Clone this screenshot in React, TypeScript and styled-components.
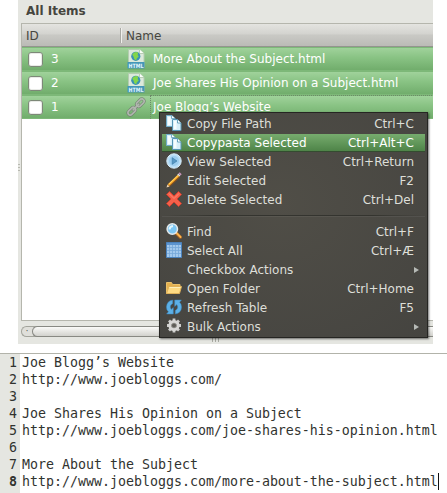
import React from "react";
import styled, { createGlobalStyle, css } from "styled-components";

const GlobalStyle = createGlobalStyle`
  * { box-sizing: border-box; }
  body { margin: 0; background: #fff; overflow: hidden; }
`;

const Screen = styled.div`
  position: relative;
  display: flex;
  flex-direction: column;
  width: 447px;
  height: 493px;
  background: #fff;
  font: 12px "DejaVu Sans", sans-serif;
  color: #46463f;
`;

const Panel = styled.section`
  display: flex;
  flex-direction: column;
  width: 415px;
  height: 344px;
  margin-left: 18px;
  padding-left: 3px;
  background: #e5e6e1;
`;

const PanelTitle = styled.h2`
  height: 23px;
  margin: 0;
  padding-left: 5px;
  font-size: 12px;
  line-height: 22px;
  font-weight: bold;
`;

const Table = styled.div`
  height: 298px;
  border: 1px solid #b5b6ad;
  border-right: 0;
  background: #fff;
`;

const HeaderRow = styled.div`
  display: flex;
  align-items: center;
  height: 23px;
  border-bottom: 1px solid #94948f;
  background: linear-gradient(#e4e4e0, #d3d3cf 45%, #c9c9c5 50%, #bbbbb6);
`;

const HeaderCell = styled.div<{ $width?: number }>`
  width: ${(p) => (p.$width ? `${p.$width}px` : "auto")};
  height: 15px;
  padding-left: 4px;
  line-height: 17px;
  ${(p) =>
    p.$width &&
    css`
      border-right: 1px solid #f0f0ed;
      box-shadow: inset -1px 0 #aaaaa5;
    `}
`;

const Row = styled.div`
  display: flex;
  align-items: center;
  height: 24px;
  color: #fff;
  background: linear-gradient(#7db878 0 1px, #a0d29b 1px, #8ac485 10px, #71ad6c 23px, #7db878 23px);
`;

const CheckBox = styled.span`
  width: 15px;
  height: 15px;
  margin-left: 6px;
  border: 1px solid #7d8878;
  border-radius: 3px;
  background: #fff;
  box-shadow: inset 0 0 0 1px #e9ebe7;
`;

const IdText = styled.span`
  width: 83px;
  padding-left: 8px;
`;

const FileIcon = styled.span`
  display: flex;
  width: 20px;
  height: 22px;
`;

const NameText = styled.span<{ $focus?: boolean }>`
  flex: 1;
  height: 24px;
  margin-left: 4px;
  padding-left: 2px;
  line-height: 24px;
  border-left: 1px dotted ${(p) => (p.$focus ? "#6d8a68" : "transparent")};
  ${(p) => p.$focus && css`background: linear-gradient(90deg, #6d8a68 50%, transparent 50%) 0 0 / 2px 1px repeat-x;`}
`;

const ScrollTrack = styled.div`
  display: flex;
  align-items: center;
  height: 11px;
  margin-top: 5px;
  border: 1px solid #a3a49c;
  border-right: 0;
  border-radius: 6px 0 0 6px;
  background: #dfdfda;
`;

const ScrollDot = styled.span`
  width: 10px;
  text-align: center;
  font-size: 8px;
  line-height: 8px;
`;

const ScrollThumb = styled.div`
  flex: 1;
  height: 11px;
  border: 1px solid #888983;
  border-right: 0;
  border-radius: 6px 0 0 6px;
  background: linear-gradient(#fafaf8, #d2d2cd);
`;

const Grip = styled.div<{ $vertical?: boolean }>`
  position: absolute;
  ${(p) =>
    p.$vertical
      ? css`
          left: 18px; top: 164px; width: 2px; height: 7px;
          background: repeating-linear-gradient(#b8b9b1 0 1px, transparent 1px 3px);
        `
      : css`
          left: 212px; top: 338px; width: 7px; height: 4px;
          background: repeating-linear-gradient(90deg, #a9aaa2 0 1px, transparent 1px 3px);
        `}
`;

const Menu = styled.div`
  position: absolute;
  left: 159px;
  top: 112px;
  width: 269px;
  height: 226px;
  padding: 1px 2px;
  border: 1px solid #252522;
  background: radial-gradient(ellipse at 45% 40%, #504e47, #454440);
  box-shadow: 1px 1px 2px rgba(0, 0, 0, 0.55);
  color: #dedfd9;
`;

const MenuItem = styled.div<{ $active?: boolean }>`
  display: flex;
  align-items: center;
  height: 19px;
  padding: 0 11px 0 4px;
  ${(p) =>
    p.$active &&
    css`
      color: #fff;
      background: linear-gradient(transparent 1px, #77ac6e 1px, #4e8448 18px, #344c30 18px);
    `}
`;

const MenuIcon = styled.span`
  display: flex;
  width: 21px;
  height: 16px;
  margin-bottom: 1px;
`;

const MenuLabel = styled.span`
  flex: 1;
`;

const SubArrow = styled.span`
  width: 0;
  height: 0;
  margin-right: -5px;
  border-left: 5px solid #b6bab6;
  border-top: 3px solid transparent;
  border-bottom: 3px solid transparent;
`;

const Separator = styled.div`
  height: 1px;
  margin: 6px 0;
  background: linear-gradient(90deg, transparent, #34342f 20%, #34342f 80%, transparent);
  box-shadow: 0 1px rgba(255, 255, 255, 0.06);
`;

const Editor = styled.section`
  display: flex;
  height: 140px;
  margin-top: 9px;
  border-top: 1px solid #b2b3aa;
  font: 13.29px/17px "DejaVu Sans Mono", monospace;
  color: #31332f;
`;

const Gutter = styled.div`
  width: 20px;
  padding-right: 3px;
  background: #e5e6e1;
  text-align: right;
`;

const LineNumber = styled.div<{ $current?: boolean }>`
  height: 17px;
  font-weight: ${(p) => (p.$current ? "bold" : "normal")};
`;

const Code = styled.div`
  padding-left: 2px;
`;

const CodeLine = styled.div<{ $caret?: boolean }>`
  width: max-content;
  height: 17px;
  white-space: pre;
  ${(p) => p.$caret && css`box-shadow: 1px 0 #111;`}
`;

const Svg = ({ children }: { children: React.ReactNode }) => (
  <svg width="16" height="16" viewBox="0 0 16 16">{children}</svg>
);

const HtmlIcon = () => (
  <svg width="20" height="22" viewBox="0 0 20 22">
    <path d="M2.500 1.500h11.500l4 4v14H2.500z" fill="#dce9db" stroke="#b4ccb1" />
    <path d="M13.500 1.500v4h4.500" fill="#fafffa" stroke="#b9ceb6" />
    <circle cx="9.800" cy="8.300" r="4.600" fill="#3a93b4" />
    <path d="M6.200 6.500q2.500-3.500 6-2l-.5 2.500 1 1.500-2 2-.5 2-2-1.500-.5-2z" fill="#83d64a" />
    <path d="M1.500 14h17v6.500h-17z" fill="#4497b8" />
    <text x="10" y="19.500" textAnchor="middle" fontFamily="DejaVu Sans" fontWeight="bold" fontSize="6" textLength="15" lengthAdjust="spacingAndGlyphs" fill="#e4f6fc">HTML</text>
  </svg>
);

const LinkIcon = () => (
  <svg width="20" height="22" viewBox="0 0 20 22">
    <g transform="rotate(-45 10 11)" fill="none">
      <g stroke="#71816f" strokeWidth="2.800">
        <rect x="-.5" y="8.700" width="9" height="4.600" rx="2.300" />
        <rect x="11.500" y="8.700" width="9" height="4.600" rx="2.300" />
        <path d="M6 11h8" strokeLinecap="round" />
      </g>
      <g stroke="#b0b6ae" strokeWidth="1.700">
        <rect x="-.5" y="8.700" width="9" height="4.600" rx="2.300" />
        <rect x="11.500" y="8.700" width="9" height="4.600" rx="2.300" />
        <path d="M6 11h8" strokeLinecap="round" />
      </g>
    </g>
  </svg>
);

const CopyIcon = () => (
  <Svg>
    <path d="M.5.500h5.500l3 3v8H.5z" fill="#d9eff9" stroke="#71acc9" />
    <path d="M5.500.500v3h3.500" fill="#fff" stroke="#5c9ab9" strokeWidth=".8" />
    <path d="M6.500 4.500h5l3.500 3.500v7.500H6.500z" fill="#d9eff9" stroke="#5796b5" />
    <path d="M2 2h2.500v8H2zM8 6h2.500v8H8z" fill="#f7fdff" />
    <path d="M11.500 4.500v3.500h3.500" fill="#fff" stroke="#4e8fae" strokeWidth=".8" />
  </Svg>
);

const PlayIcon = () => (
  <Svg>
    <circle cx="8" cy="8" r="7.200" fill="#b9def6" stroke="#d9edf9" />
    <circle cx="8" cy="8" r="5" fill="#9dceef" />
    <path d="M6.200 4.700 11 8l-4.800 3.300z" fill="#5798c4" stroke="#3977a3" strokeWidth=".6" />
  </Svg>
);

const PencilIcon = () => (
  <Svg>
    <path d="m2 14 2-1L13 4.500" stroke="#825022" strokeWidth="2.600" fill="none" />
    <path d="m2.500 13 10-9.500" stroke="#ffab25" strokeWidth="2.300" />
    <path d="m3 12 9-8.500" stroke="#ffe07a" strokeWidth=".8" />
    <path d="m12.300 3.600 1-1" stroke="#dedee0" strokeWidth="2.800" />
    <path d="m13.500 2.500 1.200-1.200" stroke="#c693b9" strokeWidth="2.800" />
    <path d="M.5 15.500 1.500 12.500l2 2z" fill="#f4d9b3" />
  </Svg>
);

const DeleteIcon = () => (
  <Svg>
    <path d="M3.500.500 8 5l4.500-4.500 3 3L11 8l4.500 4.500-3 3L8 11l-4.500 4.500-3-3L5 8 .5 3.500z" fill="#f4604a" stroke="#d0402f" strokeLinejoin="round" />
    <path d="m3 2.500 5 5 5-5" fill="none" stroke="#ff8a74" />
  </Svg>
);

const FindIcon = () => (
  <Svg>
    <path d="m10 10 4.300 4.300" stroke="#925b27" strokeWidth="3.500" strokeLinecap="round" />
    <path d="m10.500 10 4 4" stroke="#ffb44b" strokeWidth="2" strokeLinecap="round" />
    <circle cx="6.300" cy="6" r="5.200" fill="#7cc6f2" stroke="#e4e9ea" strokeWidth="1.500" />
    <path d="M3.500 6.500q0-3 3.500-3.500" stroke="#e0f6ff" strokeWidth="2" fill="none" />
  </Svg>
);

const GridIcon = () => (
  <Svg>
    <path d="M.5.500h15v15H.5z" fill="#a3c9ed" stroke="#4b82bc" />
    <path d="M1 2h14" stroke="#5c94cf" strokeWidth="2" />
    <path d="M3.500 3v12M6.500 3v12M9.500 3v12M12.500 3v12M1 5.500h14M1 8.500h14M1 11.500h14" stroke="#76a8d9" strokeWidth=".8" />
  </Svg>
);

const FolderIcon = () => (
  <Svg>
    <path d="M.5 13.500v-11h5l1 2h7.500v3" fill="#e5b04e" stroke="#eac16b" />
    <path d="M.5 13.500 3 6.500h12.500l-2 7z" fill="#ffdb83" stroke="#e0b25a" />
    <path d="M3.500 7.500h11" stroke="#fff0ba" />
  </Svg>
);

const RefreshIcon = () => (
  <Svg>
    <g fill="#5cb0e6" stroke="#3a87bd" strokeWidth=".5" strokeLinejoin="round">
      <path d="M6.700 1Q.7 2 .4 8q0 3 2 4.700L.6 15h6.700V8.500L5.200 10.400Q2.800 6.600 6.700 4.500z" />
      <path d="M9.300 15q6-1 6.300-7 0-3-2-4.700L15.400 1H8.700v6.500l2.100-1.900q2.400 3.800-1.500 5.900z" />
    </g>
  </Svg>
);

const GearIcon = () => (
  <Svg>
    <g stroke="#cececc" strokeWidth="2.800">
      <path d="M8 .5v14M1 7.500h14M3 2.500l10 10M13 2.500l-10 10" />
    </g>
    <circle cx="8" cy="7.500" r="4.100" fill="#5a5953" stroke="#d8d8d6" strokeWidth="3" />
    <circle cx="8" cy="7.500" r="2.500" fill="#5f5e58" stroke="#b0b0ad" strokeWidth=".7" />
  </Svg>
);

type Entry = { label: string; keys?: string; icon?: React.ReactNode; active?: boolean };

const editItems: Entry[] = [
  { label: "Copy File Path", keys: "Ctrl+C", icon: <CopyIcon /> },
  { label: "Copypasta Selected", keys: "Ctrl+Alt+C", icon: <CopyIcon />, active: true },
  { label: "View Selected", keys: "Ctrl+Return", icon: <PlayIcon /> },
  { label: "Edit Selected", keys: "F2", icon: <PencilIcon /> },
  { label: "Delete Selected", keys: "Ctrl+Del", icon: <DeleteIcon /> },
];

const tableItems: Entry[] = [
  { label: "Find", keys: "Ctrl+F", icon: <FindIcon /> },
  { label: "Select All", keys: "Ctrl+Æ", icon: <GridIcon /> },
  { label: "Checkbox Actions" },
  { label: "Open Folder", keys: "Ctrl+Home", icon: <FolderIcon /> },
  { label: "Refresh Table", keys: "F5", icon: <RefreshIcon /> },
  { label: "Bulk Actions", icon: <GearIcon /> },
];

const MenuEntries = ({ items }: { items: Entry[] }) => (
  <>
    {items.map((item) => (
      <MenuItem key={item.label} $active={item.active}>
        <MenuIcon>{item.icon}</MenuIcon>
        <MenuLabel>{item.label}</MenuLabel>
        {item.keys ? <span>{item.keys}</span> : <SubArrow />}
      </MenuItem>
    ))}
  </>
);

const rows = [
  { id: 3, name: "More About the Subject.html", icon: <HtmlIcon /> },
  { id: 2, name: "Joe Shares His Opinion on a Subject.html", icon: <HtmlIcon /> },
  { id: 1, name: "Joe Blogg’s Website", icon: <LinkIcon />, focus: true },
];

const lines = [
  "Joe Blogg’s Website",
  "http://www.joebloggs.com/",
  "",
  "Joe Shares His Opinion on a Subject",
  "http://www.joebloggs.com/joe-shares-his-opinion.html",
  "",
  "More About the Subject",
  "http://www.joebloggs.com/more-about-the-subject.html",
];

export default function App() {
  const last = lines.length - 1;
  return (
    <>
      <GlobalStyle />
      <Screen>
        <Panel>
          <PanelTitle>All Items</PanelTitle>
          <Table>
            <HeaderRow>
              <HeaderCell $width={100}>ID</HeaderCell>
              <HeaderCell>Name</HeaderCell>
            </HeaderRow>
            {rows.map((row) => (
              <Row key={row.id}>
                <CheckBox />
                <IdText>{row.id}</IdText>
                <FileIcon>{row.icon}</FileIcon>
                <NameText $focus={row.focus}>{row.name}</NameText>
              </Row>
            ))}
          </Table>
          <ScrollTrack>
            <ScrollDot>·</ScrollDot>
            <ScrollThumb />
          </ScrollTrack>
        </Panel>
        <Grip $vertical />
        <Grip />
        <Editor>
          <Gutter>
            {lines.map((_, i) => (
              <LineNumber key={i} $current={i === last}>{i + 1}</LineNumber>
            ))}
          </Gutter>
          <Code>
            {lines.map((line, i) => (
              <CodeLine key={i} $caret={i === last}>{line}</CodeLine>
            ))}
          </Code>
        </Editor>
        <Menu>
          <MenuEntries items={editItems} />
          <Separator />
          <MenuEntries items={tableItems} />
        </Menu>
      </Screen>
    </>
  );
}
